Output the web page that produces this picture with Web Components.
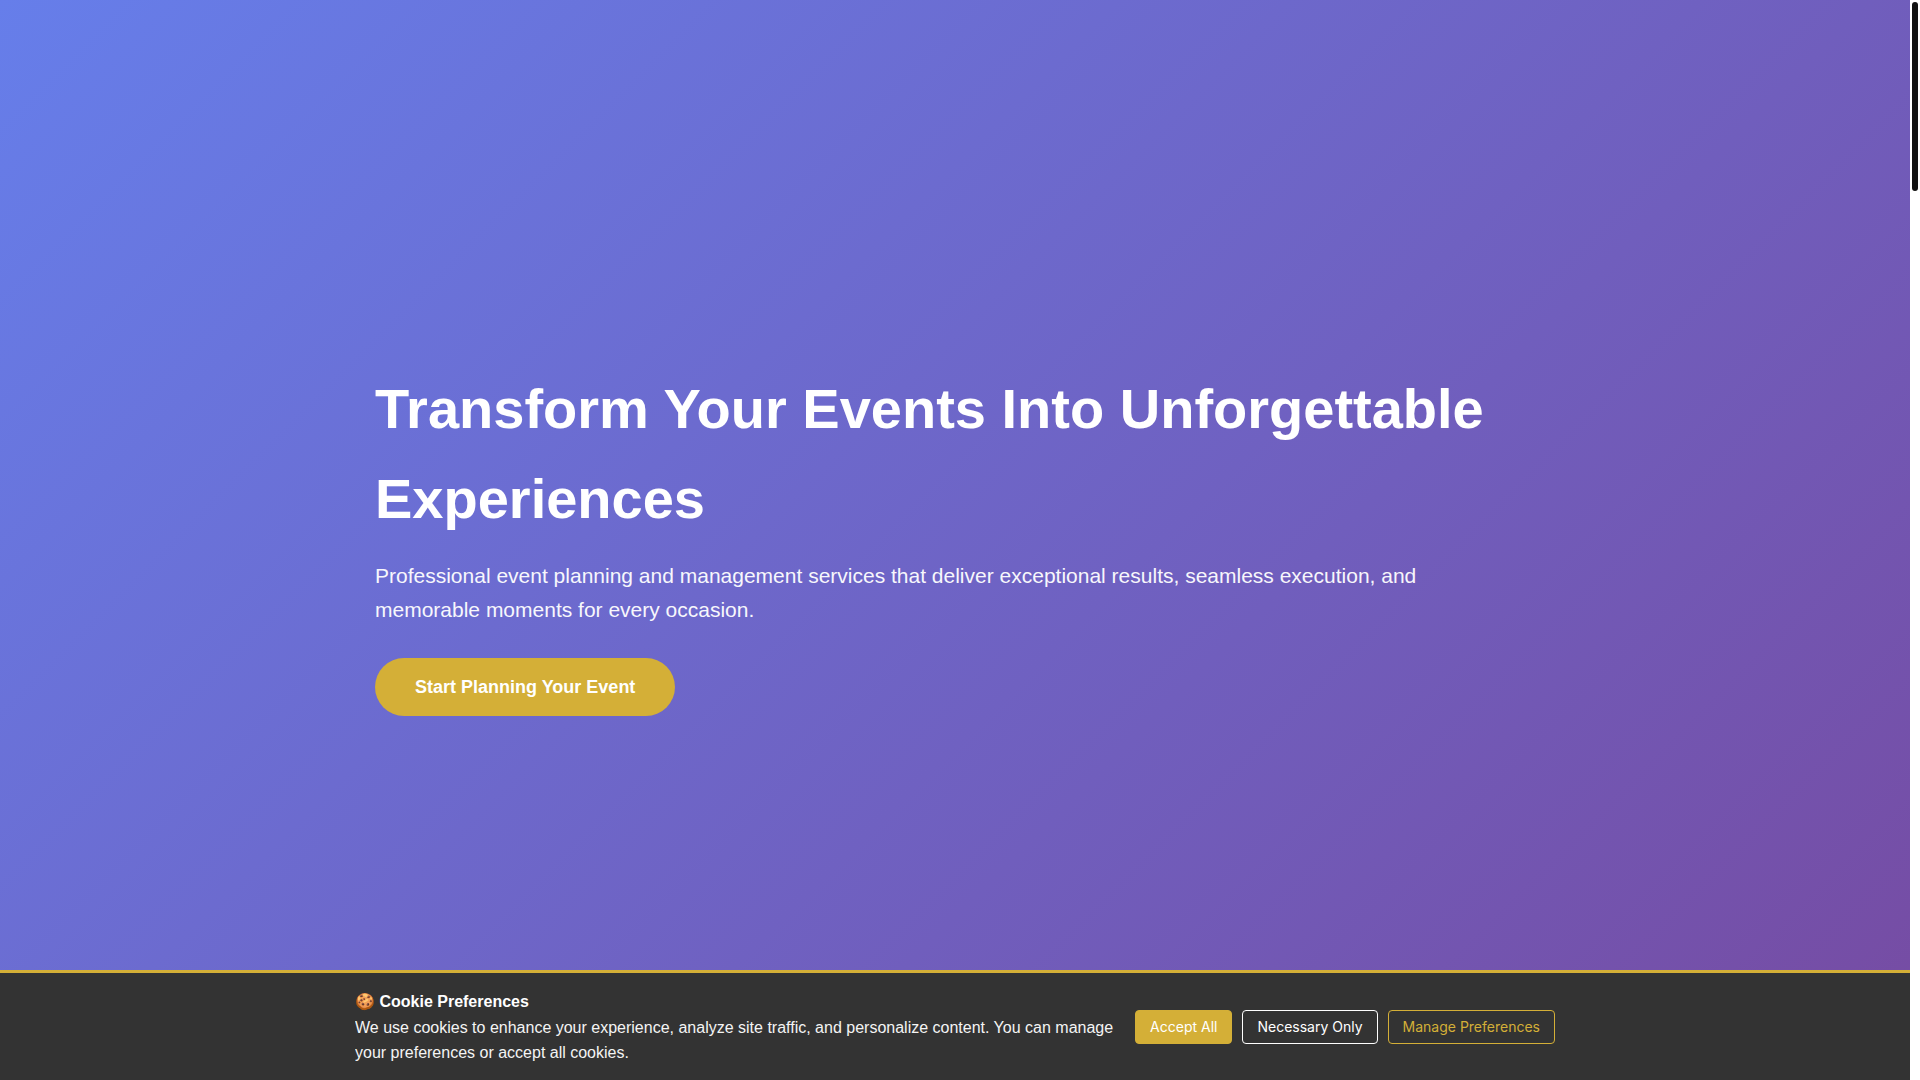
<!DOCTYPE html>
<html lang="en">
<head>
<meta charset="utf-8">
<title>Event Planning</title>
<style>
  html, body { margin: 0; height: 100%; }
  body { font-family: "Liberation Sans", Arial, sans-serif; color: #fff; overflow: hidden; }
</style>
</head>
<body>
<page-shell>
  <hero-section>
    <h1 slot="title">Transform Your Events Into Unforgettable Experiences</h1>
    <p slot="text">Professional event planning and management services that deliver exceptional results, seamless execution, and memorable moments for every occasion.</p>
    <cta-link slot="action" href="#contact">Start Planning Your Event</cta-link>
  </hero-section>
  <cookie-banner slot="banner">
    <strong slot="title">🍪 Cookie Preferences</strong>
    <span slot="text">We use cookies to enhance your experience, analyze site traffic, and personalize content. You can manage your preferences or accept all cookies.</span>
    <cookie-button slot="actions" kind="solid">Accept All</cookie-button>
    <cookie-button slot="actions" kind="light">Necessary Only</cookie-button>
    <cookie-button slot="actions" kind="gold">Manage Preferences</cookie-button>
  </cookie-banner>
  <scroll-rail slot="rail"></scroll-rail>
</page-shell>
<script>
  const define = (name, html, setup) => customElements.define(name, class extends HTMLElement {
    constructor() {
      super();
      this.attachShadow({ mode: "open" }).innerHTML = html;
    }
    connectedCallback() { if (setup) setup(this); }
  });

  define("page-shell", `
    <style>
      :host { display: flex; min-height: 100vh; }
      .page { position: relative; flex: 1; min-width: 0; display: flex; flex-direction: column; }
      .banner { position: absolute; left: 0; right: 0; bottom: 0; }
    </style>
    <main class="page"><slot></slot><div class="banner"><slot name="banner"></slot></div></main>
    <slot name="rail"></slot>`);

  define("hero-section", `
    <style>
      :host { display: flex; flex: 1; align-items: center; background: linear-gradient(135deg, #667eea 0%, #764ba2 100%); }
      .inner { box-sizing: border-box; width: 100%; max-width: 1200px; margin: 0 auto; padding: 0 20px; }
      ::slotted(h1) { margin: 0 0 15px; font-size: 56px; line-height: 90px; font-weight: 700; }
      ::slotted(p) { max-width: 1100px; margin: 0 0 31px; font-size: 21px; line-height: 34px; opacity: .95; }
    </style>
    <div class="inner">
      <slot name="title"></slot>
      <slot name="text"></slot>
      <slot name="action"></slot>
    </div>`);

  define("cta-link", `
    <style>
      :host { display: flex; }
      a { padding: 15px 40px; border-radius: 50px; background: #d4af37; color: #fff; font-size: 18px; line-height: 28px; font-weight: 700; text-decoration: none; }
    </style>
    <a><slot></slot></a>`, el => el.shadowRoot.querySelector("a").href = el.getAttribute("href"));

  define("cookie-banner", `
    <style>
      :host { display: block; padding: 15px 20px; background: #333; border-top: 3px solid #d4af37; }
      .inner { display: flex; align-items: center; justify-content: space-between; gap: 20px; max-width: 1200px; margin: 0 auto; }
      .copy { flex: 1; font-size: 16px; line-height: 25px; }
      .actions { display: flex; gap: 10px; }
      ::slotted(strong) { display: block; line-height: 27px; }
      ::slotted(span) { display: block; opacity: .95; }
    </style>
    <div class="inner">
      <div class="copy"><slot name="title"></slot><slot name="text"></slot></div>
      <div class="actions"><slot name="actions"></slot></div>
    </div>`);

  define("cookie-button", `
    <style>
      :host { display: flex; }
      button { box-sizing: border-box; height: 34px; padding: 0 14px; border: 1px solid #fff; border-radius: 4px; background: transparent; color: #fff; font: 400 14px/16px Inter, sans-serif; white-space: nowrap; cursor: pointer; }
      :host([kind="solid"]) button { border-color: #d4af37; background: #d4af37; }
      :host([kind="gold"]) button { border-color: #d4af37; color: #d4af37; }
    </style>
    <button type="button"><slot></slot></button>`);

  define("scroll-rail", `
    <style>
      :host { display: flex; flex: 0 0 10px; justify-content: center; box-sizing: border-box; padding: 2px; background: #fff; }
      .thumb { width: 6px; height: 189px; border-radius: 3px; background: #111; }
    </style>
    <div class="thumb"></div>`);
</script>
</body>
</html>
